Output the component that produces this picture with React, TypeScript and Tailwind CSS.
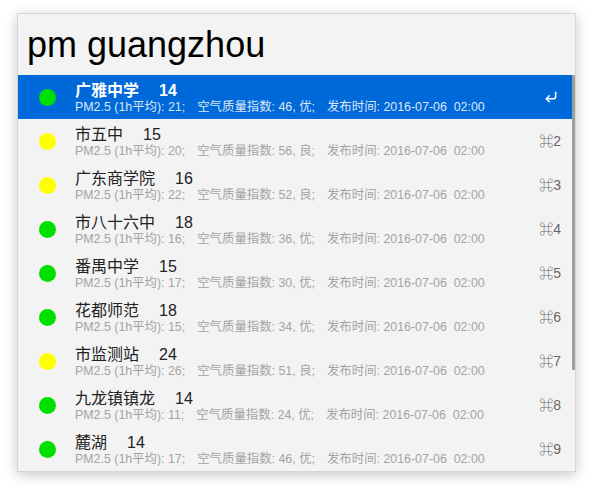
import React from 'react';
import { CornerDownLeft } from 'lucide-react';

interface Station {
  name: string;
  num: number;
  pm: number;
  aqi: number;
  level: string;
  color: 'green' | 'yellow';
}

const stations: Station[] = [
  { name: '广雅中学', num: 14, pm: 21, aqi: 46, level: '优', color: 'green' },
  { name: '市五中', num: 15, pm: 20, aqi: 56, level: '良', color: 'yellow' },
  { name: '广东商学院', num: 16, pm: 22, aqi: 52, level: '良', color: 'yellow' },
  { name: '市八十六中', num: 18, pm: 16, aqi: 36, level: '优', color: 'green' },
  { name: '番禺中学', num: 15, pm: 17, aqi: 30, level: '优', color: 'green' },
  { name: '花都师范', num: 18, pm: 15, aqi: 34, level: '优', color: 'green' },
  { name: '市监测站', num: 24, pm: 26, aqi: 51, level: '良', color: 'yellow' },
  { name: '九龙镇镇龙', num: 14, pm: 11, aqi: 24, level: '优', color: 'green' },
  { name: '麓湖', num: 14, pm: 17, aqi: 46, level: '优', color: 'green' },
];

const font = { fontFamily: '"Liberation Sans", "Noto Sans CJK SC", sans-serif' };

export default function App() {
  return (
    <div className="w-[593px] h-[493px] bg-white pt-[13px] pl-[17px]" style={font}>
      <div className="w-[559px] h-[459px] bg-[#f3f3f3] border border-[#d6d6d6] shadow-[0_3px_12px_rgba(0,0,0,0.22)] flex flex-col">
        {/* search field */}
        <div className="h-[62px] flex items-center pl-[9px] pt-[1px] text-[36px] text-black leading-none">
          pm guangzhou
        </div>

        {/* results */}
        <div className="relative flex-1">
          {stations.map((s, idx) => {
            const selected = idx === 0;
            return (
              <div
                key={s.name}
                className={`h-[44px] flex items-center pr-[14px] ${selected ? 'bg-[#0069d9]' : ''}`}
              >
                <div className="w-[57px] flex justify-center pl-[1px]">
                  <div
                    className={`w-[17px] h-[17px] rounded-full ${s.color === 'green' ? 'bg-[#00e000]' : 'bg-[#ffff00]'}`}
                  />
                </div>
                <div className="flex-1 flex flex-col pt-[1px]">
                  <div className={`text-[16px] leading-[19px] ${selected ? 'text-white font-semibold' : 'text-[#222]'}`}>
                    <span>{s.name}</span>
                    <span className="ml-[20px]">{s.num}</span>
                  </div>
                  <div className={`text-[12.4px] leading-[15px] whitespace-pre ${selected ? 'text-[#dce6f7]' : 'text-[#a3a3a3]'}`}>
                    <span className="mr-[12px]">PM2.5 (1h平均): {s.pm};</span>
                    <span className="mr-[12px]">空气质量指数: {s.aqi}, {s.level};</span>
                    <span>发布时间: 2016-07-06  02:00</span>
                  </div>
                </div>
                <div className={`text-[14px] ${selected ? 'text-white' : 'text-[#666]'}`}>
                  {selected ? <CornerDownLeft size={14} strokeWidth={2.6} className="mr-[3px]" /> : `⌘${idx + 1}`}
                </div>
              </div>
            );
          })}
          {/* scroll thumb */}
          <div className="absolute right-0 top-0 w-[3px] h-[295px] bg-[#9e9e9e]" />
        </div>
      </div>
    </div>
  );
}
